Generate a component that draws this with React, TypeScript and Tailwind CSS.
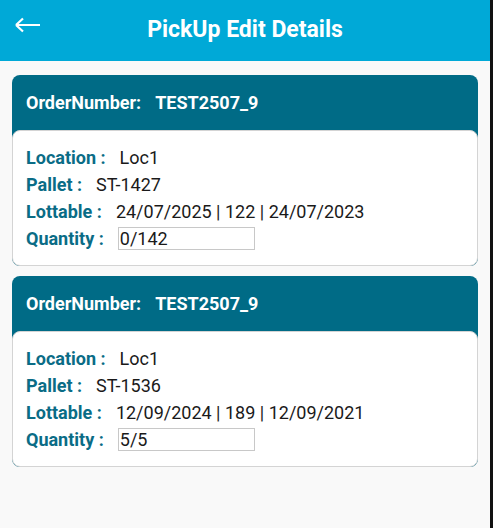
import React from 'react'

type Pick = {
  order: string
  location: string
  pallet: string
  lottable: string
  qty: string
}

const picks: Pick[] = [
  { order: 'TEST2507_9', location: 'Loc1', pallet: 'ST-1427', lottable: '24/07/2025 | 122 | 24/07/2023', qty: '0/142' },
  { order: 'TEST2507_9', location: 'Loc1', pallet: 'ST-1536', lottable: '12/09/2024 | 189 | 12/09/2021', qty: '5/5' },
]

function Row({ label, children }: { label: string; children: React.ReactNode }) {
  return (
    <div className="flex items-center h-[27px]">
      <span className="font-bold text-[#0a6c86]">{label}</span>
      <span className="ml-[14px] flex items-center text-[#1a1a1a]">{children}</span>
    </div>
  )
}

function PickCard({ p }: { p: Pick }) {
  return (
    <div className="rounded-[8px] bg-[#006b86]">
      <div className="h-[55px] flex items-center px-[14px] text-white font-bold text-[18px]">
        <span>OrderNumber:</span>
        <span className="ml-[14px]">{p.order}</span>
      </div>
      <div className="bg-white border border-[#d4d4d4] rounded-[8px] px-[13px] pt-[13px] pb-[13px] text-[18px] leading-none">
        <Row label="Location :">{p.location}</Row>
        <Row label="Pallet :">{p.pallet}</Row>
        <Row label="Lottable :">{p.lottable}</Row>
        <Row label="Quantity :">
          <div className="w-[137px] h-[23px] border border-[#c8c8c8] flex items-center pl-[1px]">
            {p.qty}
          </div>
        </Row>
      </div>
    </div>
  )
}

export default function App() {
  return (
    <div className="flex w-[493px] h-[528px] overflow-hidden" style={{ fontFamily: 'Roboto, "Noto Sans", sans-serif' }}>
      <div className="flex-1 bg-[#f9f9f9]">
        {/* top bar */}
        <div className="h-[61px] bg-[#00a9d7] flex items-center relative">
          <svg className="absolute left-[14px] top-[17px]" width="28" height="16" viewBox="0 0 28 16" fill="none">
            <path d="M2 8H26M2 8L9 1.5M2 8L9 14.5" stroke="white" strokeWidth="2.2" />
          </svg>
          <h1 className="w-full text-center text-white font-bold text-[23px]">PickUp Edit Details</h1>
        </div>

        {/* pick list */}
        <div className="px-[12px] pt-[14px] flex flex-col gap-[10px]">
          {picks.map((p, i) => (
            <PickCard key={i} p={p} />
          ))}
        </div>
      </div>
      <div className="w-[3px] bg-[#111]" />
    </div>
  )
}
